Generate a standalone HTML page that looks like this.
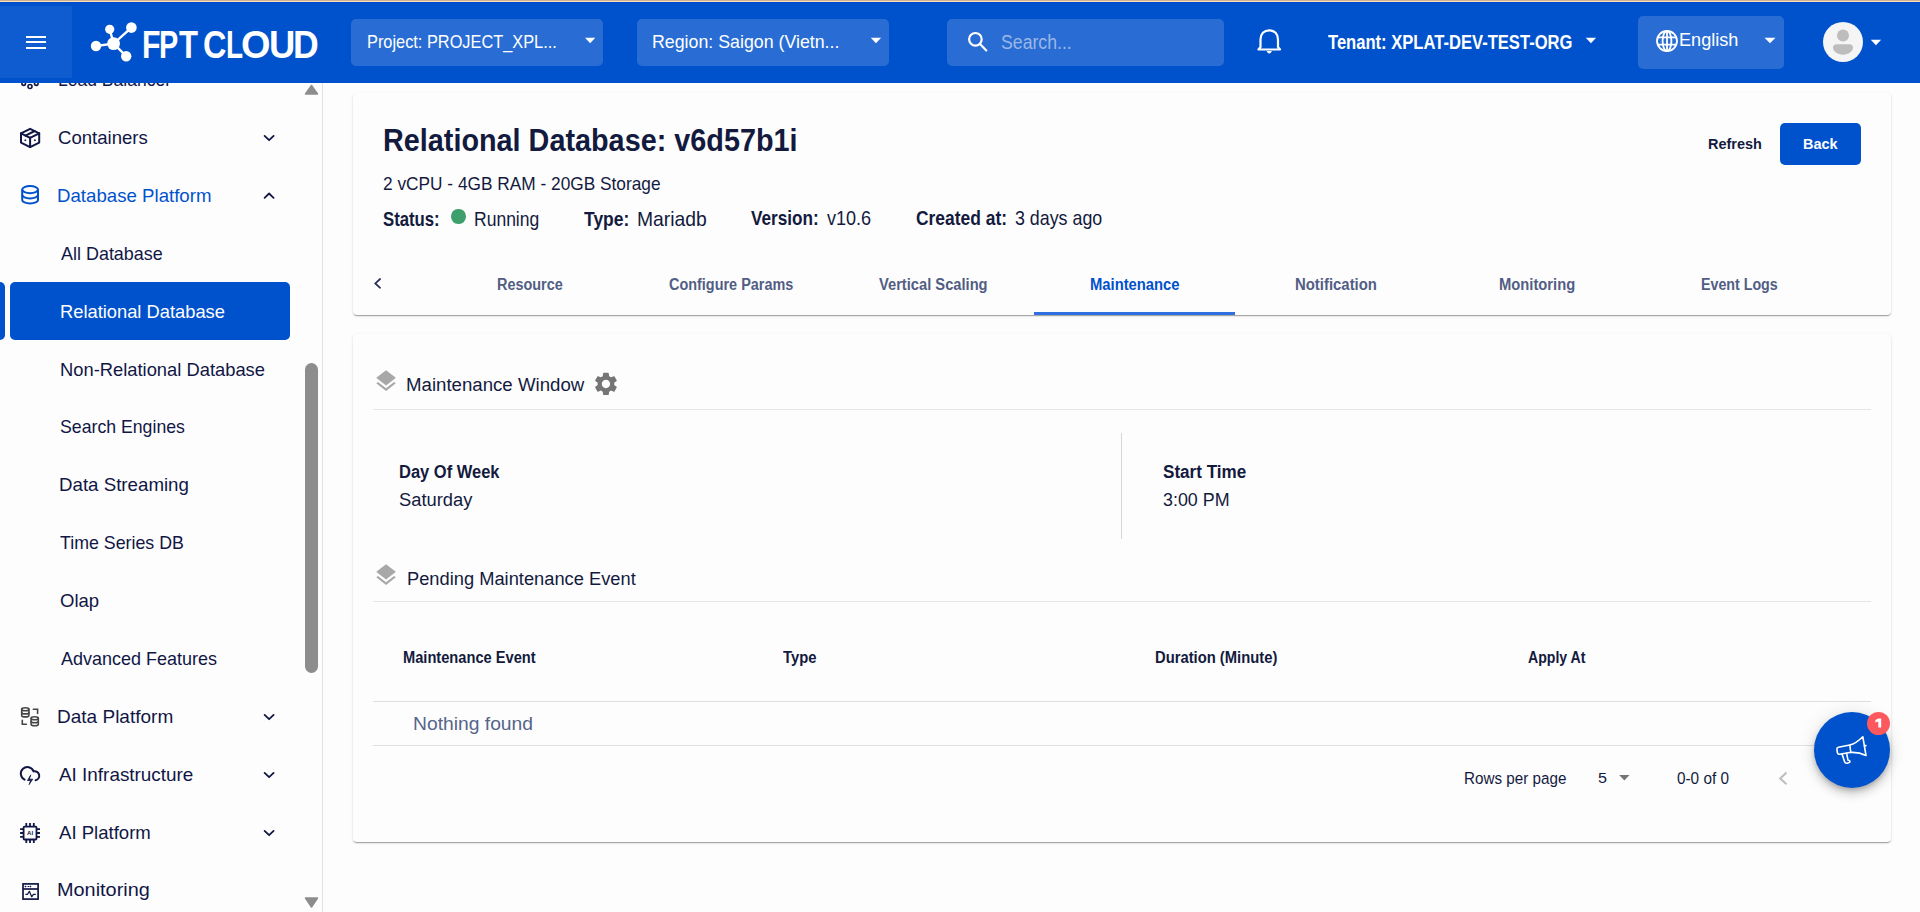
<!DOCTYPE html>
<html><head><meta charset="utf-8">
<style>
html,body{margin:0;padding:0;width:1920px;height:912px;overflow:hidden;background:#fdfdfd;font-family:"Liberation Sans",sans-serif;}
.a{position:absolute;}
.t{position:absolute;white-space:nowrap;line-height:normal;transform-origin:0 0;font-family:"Liberation Sans",sans-serif;}
.card{position:absolute;background:#fdfdfd;border-radius:4px;box-shadow:0px 2px 1px -1px rgba(0,0,0,0.2),0px 1px 1px 0px rgba(0,0,0,0.14),0px 1px 3px 0px rgba(0,0,0,0.12);}
.dd{position:absolute;background:rgba(255,255,255,0.16);border-radius:5px;}
svg{position:absolute;overflow:visible;}
</style></head><body>
<!-- sidebar -->
<div class="a" style="left:0;top:83px;width:322px;height:829px;background:#fdfdfd"></div>
<div class="a" style="left:322px;top:83px;width:1px;height:829px;background:#e2e2e2"></div>
<!-- active item -->
<div class="a" style="left:10px;top:282px;width:280px;height:58px;background:#0052cc;border-radius:5px"></div>
<div class="a" style="left:-5px;top:282px;width:10px;height:58px;background:#0052cc;border-radius:5px"></div>
<!-- scrollbar -->
<svg style="left:0;top:0" width="1" height="1">
  <path d="M311.5 85.5 L317.5 94 L305.5 94 Z" fill="#8d8d8d" stroke="#8d8d8d" stroke-width="1.5" stroke-linejoin="round"/>
  <path d="M305.5 898 L317.5 898 L311.5 907 Z" fill="#8d8d8d" stroke="#8d8d8d" stroke-width="1.5" stroke-linejoin="round"/>
</svg>
<div class="a" style="left:305px;top:363px;width:13px;height:310px;background:#8d8d8d;border-radius:6.5px"></div>
<!-- sidebar icons -->
<svg style="left:0;top:0" width="1" height="1" fill="none" stroke="#111645" stroke-width="2" stroke-linejoin="round" stroke-linecap="round">
  <!-- load balancer (partial) -->
  <circle cx="23.7" cy="83.6" r="1.8" stroke-width="1.6"/>
  <circle cx="30" cy="86.5" r="2" stroke-width="1.6"/>
  <circle cx="36.3" cy="83.6" r="1.8" stroke-width="1.6"/>
  <!-- box -->
  <path d="M30.1 128.8 L39.2 133.3 L39.2 142.6 L30.1 147.1 L21 142.6 L21 133.3 Z"/>
  <path d="M21 133.3 L30.1 137.8 L39.2 133.3 M30.1 137.8 V147.1"/>
  <path d="M25.5 135.6 L34.7 131"/>
  <circle cx="25.2" cy="140.2" r="0.5" fill="#111645" stroke-width="0.8"/>
  <circle cx="34.8" cy="140.2" r="0.5" fill="#111645" stroke-width="0.8"/>
  <!-- chevrons -->
  <path d="M264.6 135.9 L269.1 140.2 L273.6 135.9" stroke-width="1.8"/>
  <path d="M264.6 197.8 L269.1 193.5 L273.6 197.8" stroke-width="1.8"/>
  <path d="M264.6 714.9 L269.1 719.2 L273.6 714.9" stroke-width="1.8"/>
  <path d="M264.6 772.9 L269.1 777.2 L273.6 772.9" stroke-width="1.8"/>
  <path d="M264.6 830.9 L269.1 835.2 L273.6 830.9" stroke-width="1.8"/>
</svg>
<!-- db icon (blue) -->
<svg style="left:0;top:0" width="1" height="1" fill="none" stroke="#0052cc" stroke-width="2">
  <ellipse cx="30.1" cy="189.6" rx="7.9" ry="3.6"/>
  <path d="M22.2 189.6 V199.9 A7.9 3.6 0 0 0 38 199.9 V189.6"/>
  <path d="M22.2 194.8 A7.9 3.6 0 0 0 38 194.8"/>
</svg>
<!-- data platform icon -->
<svg style="left:0;top:0" width="1" height="1" fill="none" stroke="#454545" stroke-width="1.6" stroke-linecap="round">
  <ellipse cx="25.3" cy="709.3" rx="3.6" ry="1.5"/>
  <path d="M21.7 709.3 V715.4 A3.6 1.5 0 0 0 28.9 715.4 V709.3"/>
  <path d="M21.7 712.4 A3.6 1.5 0 0 0 28.9 712.4"/>
  <ellipse cx="34.7" cy="718.2" rx="3.6" ry="1.5"/>
  <path d="M31.1 718.2 V724.3 A3.6 1.5 0 0 0 38.3 724.3 V718.2"/>
  <path d="M31.1 721.3 A3.6 1.5 0 0 0 38.3 721.3"/>
  <path d="M33.3 709.3 H37.6 V713.4"/>
  <path d="M22.3 720.2 V724.3 H26.4"/>
</svg>
<!-- ai infra icon -->
<svg style="left:0;top:0" width="1" height="1" fill="none" stroke="#111645" stroke-width="2" stroke-linecap="round">
  <path d="M24.6 779.6 A6.6 6.6 0 1 1 33.6 771.3 A4.6 4.6 0 1 1 35.6 780.3"/>
  <path d="M30.6 775.2 L27.5 780.5 L30.6 780.5 L29.1 784.6 L32.7 779.2 L29.6 779.2 Z" fill="#111645" stroke-width="0.8" stroke-linejoin="round"/>
</svg>
<!-- ai platform chip -->
<svg style="left:0;top:0" width="1" height="1" fill="none" stroke="#111645" stroke-width="1.8" stroke-linecap="butt">
  <rect x="23.6" y="826.6" width="12.9" height="12.9" rx="0.8"/>
  <path d="M26.3 823 V826.6 M30 823 V826.6 M33.8 823 V826.6 M26.3 839.5 V843 M30 839.5 V843 M33.8 839.5 V843 M20.1 829.2 H23.6 M20.1 833 H23.6 M20.1 836.8 H23.6 M36.5 829.2 H40 M36.5 833 H40 M36.5 836.8 H40"/>
  <text x="30.1" y="835.2" font-family="Liberation Sans" font-size="6" font-weight="700" fill="#111645" stroke="none" text-anchor="middle">AI</text>
</svg>
<!-- monitoring icon -->
<svg style="left:0;top:0" width="1" height="1" fill="none" stroke="#111645" stroke-width="1.7">
  <rect x="23" y="883.9" width="15.1" height="15.2"/>
  <path d="M23 889 H38.1"/>
  <circle cx="25.5" cy="886.5" r="0.6" fill="#111645" stroke-width="0.6"/>
  <path d="M27.6 886.5 H29" stroke-width="1"/>
  <circle cx="30.4" cy="886.5" r="0.6" fill="#111645" stroke-width="0.6"/>
  <path d="M25.4 894.3 H27.6 L29.3 891.3 L31.7 896.8 L33.4 894.3 H35.8" stroke-width="1.2" stroke-linejoin="round"/>
</svg>

<!-- cards -->
<div class="card" style="left:353px;top:93px;width:1538px;height:222px"></div>
<div class="card" style="left:353px;top:334px;width:1538px;height:508px"></div>

<!-- card1 shapes -->
<div class="a" style="left:451.3px;top:209.3px;width:14.3px;height:14.3px;border-radius:50%;background:#3d9f6c"></div>
<div class="a" style="left:1780px;top:123px;width:81px;height:42px;background:#0052cc;border-radius:5px"></div>
<svg style="left:0;top:0" width="1" height="1" fill="none" stroke="#262b58" stroke-width="1.7" stroke-linecap="round" stroke-linejoin="miter">
  <path d="M380.1 279 L375.3 283.4 L380.1 287.8"/>
</svg>
<div class="a" style="left:1034px;top:312px;width:201px;height:3px;background:#2f6fe0"></div>

<!-- card2 shapes -->
<svg style="left:373.3px;top:367.9px" width="26.1" height="26.1" viewBox="0 0 24 24"><path fill="#a8a8a8" d="M11.99 18.54l-7.37-5.73L3 14.07l9 7 9-7-1.63-1.27-7.38 5.74zM12 16l7.36-5.73L21 9l-9-7-9 7 1.63 1.27L12 16z"/></svg>
<svg style="left:373.3px;top:562.2px" width="26.1" height="26.1" viewBox="0 0 24 24"><path fill="#a8a8a8" d="M11.99 18.54l-7.37-5.73L3 14.07l9 7 9-7-1.63-1.27-7.38 5.74zM12 16l7.36-5.73L21 9l-9-7-9 7 1.63 1.27L12 16z"/></svg>
<!-- gear -->
<svg style="left:592.3px;top:370.1px" width="27.9" height="27.9" viewBox="0 0 24 24">
  <path fill="#757575" d="M19.14 12.94c.04-.3.06-.61.06-.94 0-.32-.02-.64-.07-.94l2.03-1.58c.18-.14.23-.41.12-.61l-1.92-3.32c-.12-.22-.37-.29-.59-.22l-2.39.96c-.5-.38-1.03-.7-1.62-.94l-.36-2.54c-.04-.24-.24-.41-.48-.41h-3.84c-.24 0-.43.17-.47.41l-.36 2.54c-.59.24-1.13.57-1.62.94l-2.39-.96c-.22-.08-.47 0-.59.22L2.74 8.87c-.12.21-.08.47.12.61l2.03 1.58c-.05.3-.09.63-.09.94s.02.64.07.94l-2.03 1.58c-.18.14-.23.41-.12.61l1.92 3.32c.12.22.37.29.59.22l2.39-.96c.5.38 1.03.7 1.62.94l.36 2.54c.05.24.24.41.48.41h3.84c.24 0 .44-.17.47-.41l.36-2.54c.59-.24 1.13-.56 1.62-.94l2.39.96c.22.08.47 0 .59-.22l1.92-3.32c.12-.22.07-.47-.12-.61l-2.01-1.58zM12 15.6c-1.98 0-3.6-1.62-3.6-3.6s1.62-3.6 3.6-3.6 3.6 1.62 3.6 3.6-1.62 3.6-3.6 3.6z"/>
</svg>
<div class="a" style="left:373px;top:409px;width:1498px;height:1px;background:#e6e6e6"></div>
<div class="a" style="left:1121px;top:433px;width:1px;height:106px;background:#d6d6d6"></div>
<div class="a" style="left:373px;top:601px;width:1498px;height:1px;background:#e6e6e6"></div>
<div class="a" style="left:373px;top:701px;width:1498px;height:1px;background:#e0e0e0"></div>
<div class="a" style="left:373px;top:745px;width:1498px;height:1px;background:#e0e0e0"></div>
<svg style="left:0;top:0" width="1" height="1">
  <path d="M1619.2 775 H1629.5 L1624.35 780.5 Z" fill="#757575"/>
  <path d="M1786.5 772.5 L1780.2 778.4 L1786.5 784.3" fill="none" stroke="#bdbdbd" stroke-width="2"/>
</svg>
<!-- FAB -->
<div class="a" style="left:1814px;top:712px;width:76px;height:76px;border-radius:50%;background:#0052cc;box-shadow:0 3px 5px -1px rgba(0,0,0,.2),0 6px 10px 0 rgba(0,0,0,.14),0 1px 18px 0 rgba(0,0,0,.12)"></div>
<svg style="left:0;top:0" width="1" height="1" fill="none" stroke="#fff" stroke-width="1.6" stroke-linejoin="round" stroke-linecap="round">
  <path d="M1838.4 747.3 L1849.8 745 C1854 744 1858 741.5 1862.8 736.7 L1866 755.5 C1861 753 1856 752 1849.8 752.5 L1839.6 754.2 C1838.2 754.4 1837.6 753.8 1837.4 752.6 L1836.9 749 C1836.8 748 1837.4 747.5 1838.4 747.3 Z"/>
  <path d="M1849.8 745 L1850.8 752.5"/>
  <path d="M1842 754 L1844.6 761.8 C1845 763 1846.3 763.4 1847.6 763.1 L1849.3 762.5 C1850.2 762 1850.2 761 1849.4 760.6 L1848 760.2 L1846.6 753.4"/>
  <path d="M1864.5 745.8 L1866 745.6"/>
</svg>
<div class="a" style="left:1867px;top:712px;width:23px;height:23px;border-radius:50%;background:#fc585e"></div>
<svg style="left:0;top:0" width="1" height="1"><path d="M1878.3 718.4 H1881.2 V727.6 H1878.3 V721.6 L1875.4 722.6 V720 Z" fill="#fff"/></svg>

<div class="t" style="left:58.11px;top:69.20px;font-size:18.91px;font-weight:400;color:#111645;transform:scaleX(0.9272)">Load Balancer</div>
<div class="t" style="left:57.82px;top:127.00px;font-size:18.91px;font-weight:400;color:#111645;transform:scaleX(0.9827)">Containers</div>
<div class="t" style="left:57.32px;top:185.00px;font-size:18.91px;font-weight:400;color:#0052cc;transform:scaleX(0.9867)">Database Platform</div>
<div class="t" style="left:61.10px;top:242.80px;font-size:18.91px;font-weight:400;color:#111645;transform:scaleX(0.9493)">All Database</div>
<div class="t" style="left:59.55px;top:300.60px;font-size:18.91px;font-weight:400;color:#ffffff;transform:scaleX(0.9685)">Relational Database</div>
<div class="t" style="left:59.54px;top:358.80px;font-size:18.91px;font-weight:400;color:#111645;transform:scaleX(0.9703)">Non-Relational Database</div>
<div class="t" style="left:59.76px;top:416.30px;font-size:18.91px;font-weight:400;color:#111645;transform:scaleX(0.9359)">Search Engines</div>
<div class="t" style="left:59.22px;top:474.20px;font-size:18.91px;font-weight:400;color:#111645;transform:scaleX(0.9891)">Data Streaming</div>
<div class="t" style="left:60.23px;top:532.00px;font-size:18.91px;font-weight:400;color:#111645;transform:scaleX(0.9405)">Time Series DB</div>
<div class="t" style="left:60.27px;top:590.40px;font-size:18.91px;font-weight:400;color:#111645;transform:scaleX(0.9792)">Olap</div>
<div class="t" style="left:61.00px;top:647.70px;font-size:18.91px;font-weight:400;color:#111645;transform:scaleX(0.9513)">Advanced Features</div>
<div class="t" style="left:57.29px;top:706.20px;font-size:18.91px;font-weight:400;color:#111645;transform:scaleX(1.0058)">Data Platform</div>
<div class="t" style="left:58.80px;top:763.90px;font-size:18.91px;font-weight:400;color:#111645;transform:scaleX(0.9989)">AI Infrastructure</div>
<div class="t" style="left:58.80px;top:821.90px;font-size:18.91px;font-weight:400;color:#111645;transform:scaleX(0.9821)">AI Platform</div>
<div class="t" style="left:57.22px;top:879.30px;font-size:18.91px;font-weight:400;color:#111645;transform:scaleX(1.0515)">Monitoring</div>
<div class="t" style="left:382.80px;top:122.00px;font-size:32.0px;font-weight:700;color:#131a3d;transform:scaleX(0.8999)">Relational Database: v6d57b1i</div>
<div class="t" style="left:382.69px;top:173.00px;font-size:18.91px;font-weight:400;color:#131a3d;transform:scaleX(0.9140)">2 vCPU - 4GB RAM - 20GB Storage</div>
<div class="t" style="left:382.97px;top:207.70px;font-size:19.35px;font-weight:700;color:#131a3d;transform:scaleX(0.8648)">Status:</div>
<div class="t" style="left:473.94px;top:207.70px;font-size:19.35px;font-weight:400;color:#131a3d;transform:scaleX(0.9054)">Running</div>
<div class="t" style="left:583.97px;top:207.70px;font-size:19.35px;font-weight:700;color:#131a3d;transform:scaleX(0.9042)">Type:</div>
<div class="t" style="left:636.70px;top:207.70px;font-size:19.35px;font-weight:400;color:#131a3d;transform:scaleX(0.9985)">Mariadb</div>
<div class="t" style="left:750.98px;top:207.20px;font-size:19.35px;font-weight:700;color:#131a3d;transform:scaleX(0.8875)">Version:</div>
<div class="t" style="left:826.70px;top:207.20px;font-size:19.35px;font-weight:400;color:#131a3d;transform:scaleX(0.9333)">v10.6</div>
<div class="t" style="left:915.62px;top:207.20px;font-size:19.35px;font-weight:700;color:#131a3d;transform:scaleX(0.9005)">Created at:</div>
<div class="t" style="left:1014.91px;top:207.20px;font-size:19.35px;font-weight:400;color:#131a3d;transform:scaleX(0.9215)">3 days ago</div>
<div class="t" style="left:1708.36px;top:134.80px;font-size:15.42px;font-weight:700;color:#131a3d;transform:scaleX(0.9387)">Refresh</div>
<div class="t" style="left:1802.86px;top:134.80px;font-size:15.42px;font-weight:700;color:#ffffff;transform:scaleX(0.9371)">Back</div>
<div class="t" style="left:496.90px;top:276.10px;font-size:16.0px;font-weight:700;color:#525d84;transform:scaleX(0.9011)">Resource</div>
<div class="t" style="left:669.12px;top:276.10px;font-size:16.0px;font-weight:700;color:#525d84;transform:scaleX(0.9018)">Configure Params</div>
<div class="t" style="left:878.87px;top:276.10px;font-size:16.0px;font-weight:700;color:#525d84;transform:scaleX(0.9179)">Vertical Scaling</div>
<div class="t" style="left:1089.68px;top:276.10px;font-size:16.0px;font-weight:700;color:#0052cc;transform:scaleX(0.9239)">Maintenance</div>
<div class="t" style="left:1294.97px;top:276.10px;font-size:16.0px;font-weight:700;color:#525d84;transform:scaleX(0.9314)">Notification</div>
<div class="t" style="left:1499.38px;top:276.10px;font-size:16.0px;font-weight:700;color:#525d84;transform:scaleX(0.9217)">Monitoring</div>
<div class="t" style="left:1700.71px;top:276.10px;font-size:16.0px;font-weight:700;color:#525d84;transform:scaleX(0.8899)">Event Logs</div>
<div class="t" style="left:406.40px;top:373.70px;font-size:18.62px;font-weight:400;color:#131a3d;transform:scaleX(1.0017)">Maintenance Window</div>
<div class="t" style="left:399.17px;top:461.70px;font-size:18.18px;font-weight:700;color:#131a3d;transform:scaleX(0.9078)">Day Of Week</div>
<div class="t" style="left:399.24px;top:489.90px;font-size:18.18px;font-weight:400;color:#131a3d;transform:scaleX(1.0083)">Saturday</div>
<div class="t" style="left:1163.43px;top:461.80px;font-size:18.18px;font-weight:700;color:#131a3d;transform:scaleX(0.9406)">Start Time</div>
<div class="t" style="left:1163.16px;top:489.80px;font-size:18.18px;font-weight:400;color:#131a3d;transform:scaleX(0.9847)">3:00 PM</div>
<div class="t" style="left:406.57px;top:567.70px;font-size:19.2px;font-weight:400;color:#131a3d;transform:scaleX(0.9530)">Pending Maintenance Event</div>
<div class="t" style="left:402.67px;top:649.00px;font-size:15.71px;font-weight:700;color:#131a3d;transform:scaleX(0.9324)">Maintenance Event</div>
<div class="t" style="left:783.46px;top:649.00px;font-size:15.71px;font-weight:700;color:#131a3d;transform:scaleX(0.9439)">Type</div>
<div class="t" style="left:1155.36px;top:649.20px;font-size:15.71px;font-weight:700;color:#131a3d;transform:scaleX(0.9411)">Duration (Minute)</div>
<div class="t" style="left:1528.15px;top:649.20px;font-size:15.71px;font-weight:700;color:#131a3d;transform:scaleX(0.8984)">Apply At</div>
<div class="t" style="left:413.08px;top:712.80px;font-size:19.05px;font-weight:400;color:#56658a;transform:scaleX(1.0129)">Nothing found</div>
<div class="t" style="left:1464.30px;top:769.80px;font-size:15.85px;font-weight:400;color:#131a3d;transform:scaleX(0.9604)">Rows per page</div>
<div class="t" style="left:1597.81px;top:769.00px;font-size:15.42px;font-weight:400;color:#131a3d;transform:scaleX(1.0483)">5</div>
<div class="t" style="left:1677.42px;top:769.80px;font-size:15.85px;font-weight:400;color:#131a3d;transform:scaleX(0.9668)">0-0 of 0</div>
<!-- header -->
<div class="a" style="left:0;top:0;width:1920px;height:1px;background:#c9b296"></div>
<div class="a" style="left:0;top:1px;width:1920px;height:1px;background:#ffe1b6"></div>
<div class="a" style="left:0;top:2px;width:1920px;height:81px;background:#0052cc"></div>
<div class="a" style="left:0;top:2px;width:1920px;height:1px;background:#0046cf"></div>
<div class="a" style="left:0;top:6px;width:72px;height:72px;background:#0f5bd0"></div>
<div class="a" style="left:26px;top:35.8px;width:20px;height:2.1px;background:#fff"></div>
<div class="a" style="left:26px;top:41.3px;width:20px;height:2.1px;background:#fff"></div>
<div class="a" style="left:26px;top:46.8px;width:20px;height:2.1px;background:#fff"></div>
<!-- logo -->
<svg style="left:0;top:0" width="1" height="1" fill="#fff" stroke="#fff">
  <path d="M113.6 43.6 L109.7 29.3 M113.6 43.6 L131.4 27.6 M113.6 43.6 L96 46 M113.6 43.6 L126.2 56.2" stroke-width="2.4"/>
  <circle cx="113.6" cy="43.6" r="6.4" stroke="none"/>
  <circle cx="109.7" cy="29.3" r="4.6" stroke="none"/>
  <circle cx="131.4" cy="27.6" r="5.3" stroke="none"/>
  <circle cx="96" cy="46" r="5.2" stroke="none"/>
  <circle cx="126.2" cy="56.2" r="5.2" stroke="none"/>
</svg>
<div class="dd" style="left:351px;top:19px;width:252px;height:47px"></div>
<div class="dd" style="left:637px;top:19px;width:252px;height:47px"></div>
<div class="dd" style="left:947px;top:19px;width:277px;height:47px"></div>
<div class="dd" style="left:1638px;top:16px;width:146px;height:53px"></div>
<svg style="left:0;top:0" width="1" height="1" fill="#fff">
  <path d="M585 37.8 H595.3 L590.15 43.3 Z"/>
  <path d="M870.8 37.8 H881.1 L875.95 43.3 Z"/>
  <path d="M1585.8 37.8 H1596.1 L1590.95 43.3 Z"/>
  <path d="M1764.5 37.8 H1775.5 L1770 43.3 Z"/>
  <path d="M1870.8 39.7 H1881.1 L1875.95 45.3 Z"/>
</svg>
<!-- search icon -->
<svg style="left:0;top:0" width="1" height="1" fill="none" stroke="#fff" stroke-width="2.2" stroke-linecap="round">
  <circle cx="975.4" cy="39.3" r="6.3"/>
  <path d="M980 44 L986.3 50.4"/>
</svg>
<!-- bell -->
<svg style="left:0;top:0" width="1" height="1" fill="none" stroke="#fff" stroke-width="2.2" stroke-linejoin="round">
  <path d="M1258.5 49.5 H1280 L1278 47 V39.5 C1278 34 1274.5 30.3 1269.25 30.3 C1264 30.3 1260.5 34 1260.5 39.5 V47 Z"/>
  <path d="M1267.3 51.5 H1271.2 L1269.25 53 Z" fill="#fff" stroke-width="1.2"/>
</svg>
<!-- globe -->
<svg style="left:0;top:0" width="1" height="1" fill="none" stroke="#fff" stroke-width="1.8">
  <circle cx="1667" cy="41" r="10"/>
  <ellipse cx="1667" cy="41" rx="4.4" ry="10"/>
  <path d="M1667 31 V51 M1657.3 37.3 H1676.7 M1657.3 44.7 H1676.7"/>
</svg>
<!-- avatar -->
<div class="a" style="left:1823px;top:22px;width:40px;height:40px;border-radius:50%;background:#f5f5f5"></div>
<svg style="left:0;top:0" width="1" height="1" fill="#bdbdbd">
  <circle cx="1843" cy="35.6" r="6"/>
  <path d="M1833 47.6 C1833 45.6 1834.4 44.2 1836.4 44.2 H1849.6 C1851.6 44.2 1853 45.6 1853 47.6 C1853 51.6 1848.5 54.7 1843 54.7 C1837.5 54.7 1833 51.6 1833 47.6 Z"/>
</svg>
<div class="t" style="left:366.51px;top:31.00px;font-size:19.05px;font-weight:400;color:#ffffff;transform:scaleX(0.8587)">Project: PROJECT_XPL...</div>
<div class="t" style="left:651.90px;top:31.00px;font-size:19.05px;font-weight:400;color:#ffffff;transform:scaleX(0.9340)">Region: Saigon (Vietn...</div>
<div class="t" style="left:1001.09px;top:30.80px;font-size:19.49px;font-weight:400;color:#9bb7e6;transform:scaleX(0.9076)">Search...</div>
<div class="t" style="left:1327.59px;top:30.60px;font-size:20.07px;font-weight:700;color:#ffffff;transform:scaleX(0.8265)">Tenant: XPLAT-DEV-TEST-ORG</div>
<div class="t" style="left:1679.17px;top:28.90px;font-size:19.05px;font-weight:400;color:#ffffff;transform:scaleX(0.9523)">English</div>
<div class="t" style="left:141.77px;top:22.60px;font-size:38.25px;font-weight:700;color:#ffffff;transform:scaleX(0.7923)">F</div>
<div class="t" style="left:159.21px;top:22.60px;font-size:38.25px;font-weight:700;color:#ffffff;transform:scaleX(0.7540)">P</div>
<div class="t" style="left:179.44px;top:22.60px;font-size:38.25px;font-weight:700;color:#ffffff;transform:scaleX(0.8111)">T</div>
<div class="t" style="left:203.43px;top:22.60px;font-size:38.25px;font-weight:700;color:#ffffff;transform:scaleX(0.8480)">C</div>
<div class="t" style="left:226.28px;top:22.60px;font-size:38.25px;font-weight:700;color:#ffffff;transform:scaleX(0.7291)">L</div>
<div class="t" style="left:240.71px;top:22.60px;font-size:38.25px;font-weight:700;color:#ffffff;transform:scaleX(0.9925)">O</div>
<div class="t" style="left:268.76px;top:22.60px;font-size:38.25px;font-weight:700;color:#ffffff;transform:scaleX(0.9522)">U</div>
<div class="t" style="left:292.67px;top:22.60px;font-size:38.25px;font-weight:700;color:#ffffff;transform:scaleX(0.9319)">D</div>
</body></html>
